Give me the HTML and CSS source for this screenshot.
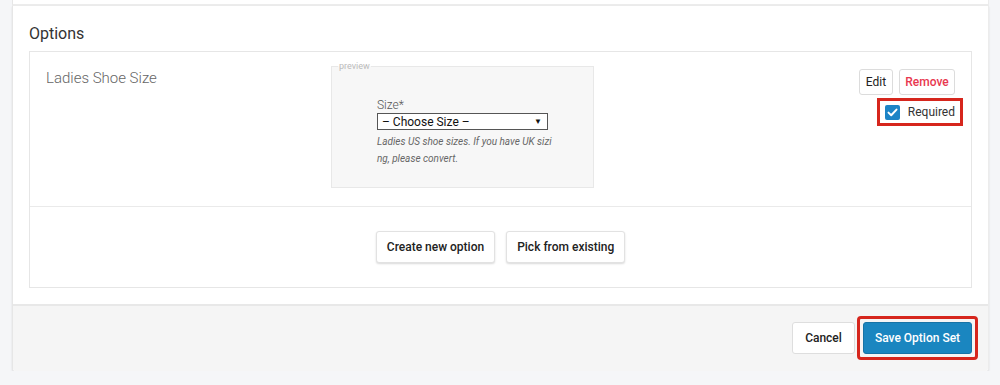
FILE: index.html
```html
<!DOCTYPE html>
<html>
<head>
<meta charset="utf-8">
<link rel="stylesheet" href="styles.css">
</head>
<body>
<div class="page">
  <div class="top-strip"></div>
  <div class="card">
    <div class="card-body">
      <h2 class="heading">Options</h2>
      <div class="options-box">
        <div class="option-row">
          <div class="option-title">Ladies Shoe Size</div>
          <fieldset class="preview">
            <legend>preview</legend>
            <div class="field">
              <label class="field-label">Size*</label>
              <div class="select"><span>– Choose Size –</span><span class="arrow">▼</span></div>
              <p class="help">Ladies US shoe sizes. If you have UK sizing, please convert.</p>
            </div>
          </fieldset>
          <div class="actions">
            <div class="btn-pair">
              <button class="btn small edit">Edit</button>
              <button class="btn small danger">Remove</button>
            </div>
            <label class="required highlight">
              <span class="checkbox"><svg width="11" height="9" viewBox="0 0 11 9"><path d="M1.5 4.6 L4.2 7.2 L9.5 1.6" fill="none" stroke="#fff" stroke-width="2" stroke-linecap="round" stroke-linejoin="round"/></svg></span>
              <span>Required</span>
            </label>
          </div>
        </div>
        <div class="add-row">
          <button class="btn raised">Create new option</button>
          <button class="btn raised">Pick from existing</button>
        </div>
      </div>
    </div>
    <div class="card-footer">
      <button class="btn footer-btn">Cancel</button>
      <span class="highlight-wrap"><button class="btn footer-btn primary">Save Option Set</button></span>
    </div>
  </div>
</div>
</body>
</html>
```
FILE: styles.css
```css
* { box-sizing: border-box; }
html, body { margin: 0; padding: 0; }
body {
  background: #f5f6f8;
  font-family: Roboto, "Liberation Sans", sans-serif;
  color: #333;
}
.page {
  padding: 0 11px 0 12px;
}
.top-strip {
  height: 6px;
  background: #fff;
  border-left: 1px solid #e6e6e6;
  border-right: 1px solid #ececec;
  border-bottom: 2px solid #ececec;
}
.card {
  background: #fff;
  border-left: 1px solid #e6e6e6;
  border-right: 1px solid #ececec;
  box-shadow: 0 1px 2px rgba(0,0,0,0.12);
  border-radius: 0 0 3px 3px;
}
.card-body {
  padding: 18px 16px 16px 16px;
}
.heading {
  margin: 0 0 7px 0;
  font-size: 16px;
  line-height: 20px;
  font-weight: 400;
  color: #333;
}
.options-box {
  border: 1px solid #e6e6e6;
}
.option-row {
  display: flex;
  align-items: flex-start;
  padding: 15px 16px 18px 16px;
  border-bottom: 1px solid #eaeaea;
}
.option-title {
  width: 285px;
  flex: none;
  font-size: 15px;
  line-height: 20px;
  font-weight: 300;
  color: #666;
  padding-top: 1px;
}
.preview {
  flex: none;
  width: 263px;
  min-width: 0;
  height: 127px;
  margin: -6px 0 0 0;
  padding: 26px 0 0 6px;
  background: #f7f7f7;
  border: 1px solid #e8e8e8;
}
.preview legend {
  padding: 0 1px;
  margin: 0;
  font-size: 9px;
  line-height: 10px;
  color: #bbb;
}
.field {
  margin-left: 39px;
}
.field-label {
  display: block;
  font-size: 12px;
  line-height: 16px;
  color: #555;
  font-weight: 300;
}
.select {
  display: flex;
  justify-content: space-between;
  align-items: center;
  width: 171px;
  height: 17px;
  padding: 0 5px 0 4px;
  background: #fff;
  border: 1px solid #555;
  font-size: 12px;
  color: #111;
}
.select .arrow {
  font-size: 8px;
}
.help {
  width: 176px;
  margin: 3px 0 0 0;
  font-size: 10px;
  line-height: 17px;
  font-style: italic;
  color: #666;
  word-break: break-all;
}
.actions {
  margin-left: auto;
  padding-top: 2px;
  display: flex;
  flex-direction: column;
  align-items: flex-end;
}
.btn-pair {
  display: flex;
  gap: 6px;
}
.btn {
  font-family: Roboto, "Liberation Sans", sans-serif;
  background: #fff;
  border: 1px solid #dcdcdc;
  border-radius: 3px;
  color: #222;
  font-size: 12px;
  font-weight: 400;
  cursor: pointer;
}
.btn.small {
  height: 26px;
  padding: 0;
}
.btn.edit {
  width: 34px;
}
.btn.danger {
  width: 56px;
  color: #e8384f;
  font-weight: 500;
}
.required {
  display: flex;
  align-items: center;
  gap: 8px;
  margin-top: 6px;
  margin-right: -5px;
  height: 22px;
  padding: 0 5px 0 5px;
  font-size: 12px;
  color: #333;
}
.highlight {
  outline: 3px solid #d6261d;
}
.checkbox {
  width: 15px;
  height: 15px;
  border-radius: 2px;
  background: #1c84c6;
  display: flex;
  align-items: center;
  justify-content: center;
}
.add-row {
  display: flex;
  justify-content: center;
  gap: 11px;
  padding: 24px 0 24px 0;
}
.btn.raised {
  height: 32px;
  padding: 0 10px;
  border: 1px solid #e2e2e2;
  box-shadow: 0 1px 2px rgba(0,0,0,0.15);
  font-weight: 500;
}
.card-footer {
  display: flex;
  justify-content: flex-end;
  align-items: center;
  gap: 2px;
  padding: 13px 13px 14px 16px;
  background: #f5f5f5;
  border-top: 2px solid #e8e8e8;
  border-radius: 0 0 3px 3px;
}
.footer-btn {
  height: 32px;
  width: 63px;
  padding: 0;
  border: 1px solid #dedede;
  font-weight: 500;
}
.highlight-wrap {
  display: flex;
  padding: 3px;
  margin-left: 3px;
  outline: 3px solid #d6261d;
  outline-offset: 0;
  border-radius: 1px;
}
.primary {
  width: 109px;
  background: #1a86c0;
  border-color: #1773a6;
  color: #fff;
  font-weight: 500;
}
```
